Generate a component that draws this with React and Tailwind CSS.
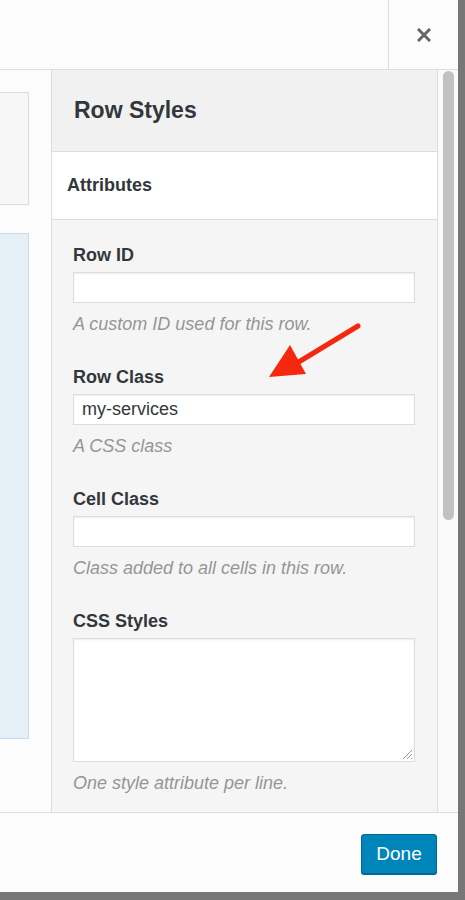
// Row Styles side panel inside a page-builder modal.

const font = { fontFamily: '"Liberation Sans", Arial, sans-serif' };

function Field({ label, value, help, tall }) {
  return (
    <div className="mb-[33px]">
      <div className="text-[18px] leading-[20px] font-bold text-[#32373c]">{label}</div>
      {tall ? (
        <div className="relative mt-[7px] h-[124px] w-[342px] border border-[#dddddd] bg-white shadow-[inset_0_1px_2px_rgba(0,0,0,0.07)]">
          <svg className="absolute bottom-[1px] right-[1px]" width="12" height="12" viewBox="0 0 12 12">
            <path d="M11 2 L2 11 M11 6 L6 11 M11 10 L10 11" stroke="#9a9a9a" strokeWidth="1" />
          </svg>
        </div>
      ) : (
        <div className="mt-[7px] flex h-[31px] w-[342px] items-center border border-[#dddddd] bg-white px-[8px] text-[18px] text-[#32373c] shadow-[inset_0_1px_2px_rgba(0,0,0,0.07)]">
          {value}
        </div>
      )}
      <div className="mt-[11px] text-[18px] leading-[20px] italic text-[#959595]">{help}</div>
    </div>
  );
}

export default function App() {
  return (
    <div className="relative h-[900px] w-[465px] overflow-hidden bg-[#777777]" style={font}>
      <div className="flex h-[892px] w-[458px] flex-col bg-[#fcfcfc]">
        {/* header */}
        <div className="flex h-[70px] shrink-0 border-b border-[#dddddd]">
          <div className="flex-1" />
          <button type="button" className="flex w-[70px] items-center justify-center border-l border-[#dddddd]">
            <svg width="14" height="14" viewBox="0 0 14 14">
              <path d="M2 2 L12 12 M12 2 L2 12" stroke="#666666" strokeWidth="3" strokeLinecap="square" />
            </svg>
          </button>
        </div>

        {/* body */}
        <div className="flex min-h-0 flex-1">
          <div className="w-[51px] shrink-0 pt-[22px]">
            <div className="h-[113px] w-[29px] border border-l-0 border-[#dddddd] bg-[#f7f7f7]" />
            <div className="mt-[28px] h-[506px] w-[29px] border border-l-0 border-[#c9dbe6] bg-[#e5f0f6]" />
          </div>

          <div className="relative flex w-[387px] shrink-0 flex-col border-l border-r border-[#dddddd] bg-[#f5f5f5]">
            <div className="flex h-[82px] shrink-0 items-center border-b border-[#dddddd] bg-[#f1f1f1] pl-[22px]">
              <span className="text-[23px] font-bold text-[#32373c]">Row Styles</span>
            </div>
            <div className="flex h-[68px] shrink-0 items-center border-b border-[#dddddd] bg-white pl-[15px]">
              <span className="text-[18px] font-bold text-[#32373c]">Attributes</span>
            </div>
            <div className="px-[21px] pt-[25px]">
              <Field label="Row ID" help="A custom ID used for this row." />
              <Field label="Row Class" value="my-services" help="A CSS class" />
              <Field label="Cell Class" help="Class added to all cells in this row." />
              <Field label="CSS Styles" tall help="One style attribute per line." />
            </div>

            {/* annotation arrow */}
            <svg className="absolute left-[-51px] top-[-70px]" width="465" height="900" viewBox="0 0 465 900">
              <path d="M357 326 L296 363" stroke="#f5280f" strokeWidth="5" strokeLinecap="round" />
              <path d="M268 377 L289 345 L305 374 Z" fill="#f5280f" />
            </svg>
          </div>

          <div className="w-[20px] shrink-0 bg-[#fafafa] pl-[5px] pt-[1px]">
            <div className="h-[449px] w-[11px] rounded-full bg-[#c1c1c1]" />
          </div>
        </div>

        {/* footer */}
        <div className="flex h-[80px] shrink-0 justify-end border-t border-[#dddddd] bg-[#fcfcfc] pr-[21px] pt-[21px]">
          <button
            type="button"
            className="h-[40px] w-[76px] rounded-[3px] border border-[#006799] bg-[#0085ba] text-[19px] text-white shadow-[0_1px_0_#006799]"
          >
            Done
          </button>
        </div>
      </div>
    </div>
  );
}
